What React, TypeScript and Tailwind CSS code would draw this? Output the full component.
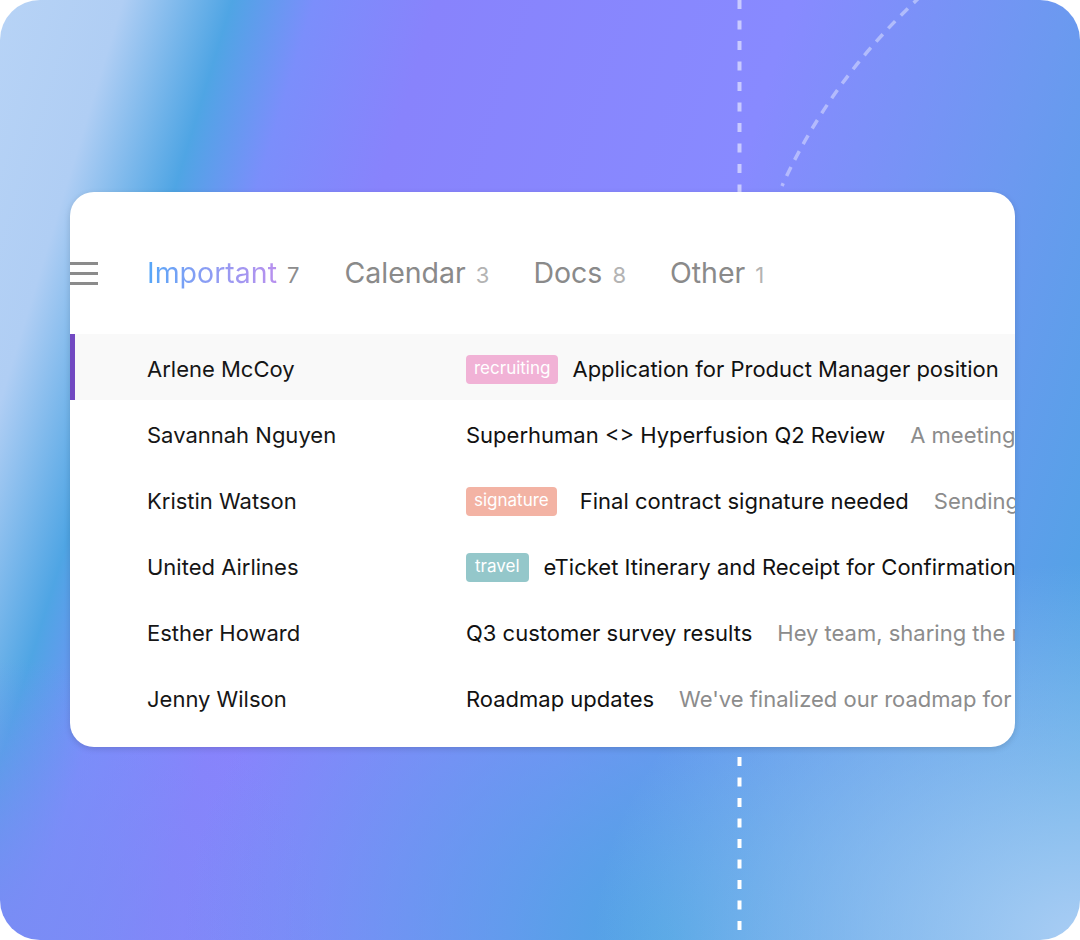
import React from 'react';

type Row = {
  name: string;
  tag?: { label: string; className: string };
  subject: string;
  preview?: string;
  active?: boolean;
};

const rows: Row[] = [
  {
    name: 'Arlene McCoy',
    tag: { label: 'recruiting', className: 'bg-[#f1b2d6] px-[8px] mr-[14px]' },
    subject: 'Application for Product Manager position',
    preview: 'Hi there, I would love to be considered',
    active: true,
  },
  {
    name: 'Savannah Nguyen',
    subject: 'Superhuman <> Hyperfusion Q2 Review',
    preview: 'A meeting to go over the quarter',
  },
  {
    name: 'Kristin Watson',
    tag: { label: 'signature', className: 'bg-[#f3b3a4] px-[8px] mr-[23px]' },
    subject: 'Final contract signature needed',
    preview: 'Sending over the final version',
  },
  {
    name: 'United Airlines',
    tag: { label: 'travel', className: 'bg-[#94c7ca] px-[9px] mr-[15px]' },
    subject: 'eTicket Itinerary and Receipt for Confirmation',
    preview: 'Thank you for choosing United',
  },
  {
    name: 'Esther Howard',
    subject: 'Q3 customer survey results',
    preview: 'Hey team, sharing the results from our survey',
  },
  {
    name: 'Jenny Wilson',
    subject: 'Roadmap updates',
    preview: "We've finalized our roadmap for the next quarter",
  },
];

const tabs = [
  { label: 'Calendar', count: 3 },
  { label: 'Docs', count: 8 },
  { label: 'Other', count: 1 },
];

export default function App() {
  return (
    <div className="w-[1080px] h-[940px] bg-white font-['Inter',sans-serif]">
      <div className="relative w-full h-full overflow-hidden rounded-[40px] bg-[radial-gradient(ellipse_45%_40%_at_100%_100%,#a9cdf4_0%,rgba(169,205,244,0)_100%),radial-gradient(ellipse_45%_45%_at_62%_100%,#4fa4e4_0%,rgba(79,164,228,0)_100%),radial-gradient(ellipse_30%_30%_at_0%_100%,#7a8cf5_0%,rgba(122,140,245,0)_100%),linear-gradient(107deg,#b7d3f6_0%,#b0cef4_9%,#4fa5e4_17%,#7b8efb_23%,#8883fc_32%,#888aff_58%,#6c99f0_78%,#4ea4e4_96%)]">
        {/* guide lines drawn over the backdrop */}
        <svg className="absolute inset-0" width="1080" height="940" viewBox="0 0 1080 940" fill="none">
          <line x1="739.5" y1="0" x2="739.5" y2="192" stroke="white" strokeOpacity="0.55" strokeWidth="4" strokeDasharray="9 11.5" />
          <line x1="739.5" y1="757" x2="739.5" y2="940" stroke="white" strokeWidth="4" strokeDasharray="9 11.5" />
          <path d="M921 -4 Q 830 80 782 186" stroke="white" strokeOpacity="0.4" strokeWidth="3.5" strokeDasharray="10 8" />
        </svg>

        <div className="relative pt-[192px] pl-[70px]">
          <div className="w-[945px] h-[555px] overflow-hidden rounded-[24px] bg-white shadow-[0_2px_6px_rgba(0,0,0,0.14)]">
            {/* tabs */}
            <div className="flex items-center h-[142px] pt-[20px] whitespace-nowrap">
              <div className="flex flex-col gap-[7px] -ml-[6px] w-[34px] shrink-0">
                <span className="block h-[3px] bg-[#8b8b8b]" />
                <span className="block h-[3px] bg-[#8b8b8b]" />
                <span className="block h-[3px] bg-[#8b8b8b]" />
              </div>
              <div className="flex items-baseline gap-[44px] ml-[49px]">
                <div className="flex items-baseline gap-[10px] mr-[1px]">
                  <span className="text-[28.5px] bg-gradient-to-r from-[#53a6f8] to-[#b890ee] bg-clip-text text-transparent">
                    Important
                  </span>
                  <span className="text-[22px] text-[#8d8d8d]">7</span>
                </div>
                {tabs.map((t) => (
                  <div key={t.label} className="flex items-baseline gap-[10px]">
                    <span className="text-[28.5px] text-[#8a8a8a]">{t.label}</span>
                    <span className="text-[22px] text-[#b3b3b3]">{t.count}</span>
                  </div>
                ))}
              </div>
            </div>

            {/* message list */}
            <div className="flex flex-col">
              {rows.map((r) => (
                <div
                  key={r.name}
                  className={`relative flex items-center h-[66px] pt-[4px] whitespace-nowrap ${r.active ? 'bg-[#f9f9f9]' : ''}`}
                >
                  {r.active && <span className="absolute left-0 top-0 bottom-0 w-[5px] bg-[#7249c2]" />}
                  <div className="w-[396px] shrink-0 pl-[77px] text-[22px] text-[#161616]">{r.name}</div>
                  <div className="flex items-center min-w-0">
                    {r.tag && (
                      <span
                        className={`h-[29px] flex items-center rounded-[4px] text-[17px] text-white ${r.tag.className}`}
                      >
                        {r.tag.label}
                      </span>
                    )}
                    <span className="text-[22px] text-[#111111]">{r.subject}</span>
                    {r.preview && (
                      <span className="ml-[25px] text-[22px] text-[#8c8c8c]">{r.preview}</span>
                    )}
                  </div>
                </div>
              ))}
            </div>
          </div>
        </div>
      </div>
    </div>
  );
}
